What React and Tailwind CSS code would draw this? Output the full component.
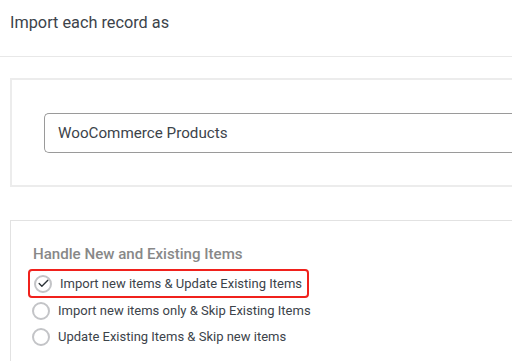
import { Check } from "lucide-react";

const options = [
  { label: "Import new items & Update Existing Items", checked: true },
  { label: "Import new items only & Skip Existing Items", checked: false },
  { label: "Update Existing Items & Skip new items", checked: false },
];

function Radio({ checked }) {
  return (
    <span className="w-[18px] h-[18px] rounded-full border-2 border-[#c3c4c7] flex items-center justify-center shrink-0">
      {checked && <Check className="w-[13px] h-[13px] text-[#2c3338]" strokeWidth={2.5} />}
    </span>
  );
}

export default function App() {
  return (
    <div className="w-[512px] h-[361px] overflow-hidden bg-white font-['Roboto',sans-serif] text-[#3c434a]">
      {/* Header */}
      <div className="h-[57px] border-b border-[#e8e8e8] pl-[10px] pt-[13px]">
        <h2 className="text-[16.3px] leading-[20px]">Import each record as</h2>
      </div>

      {/* Post type box */}
      <div className="ml-[10px] mt-[21px] h-[109px] border-2 border-r-0 border-[#ececec] pl-[32px] pt-[33px]">
        <div className="h-[40px] border border-[#9a9a9a] border-r-0 rounded-l-[5px] flex items-center pl-[13px] text-[15.2px]">
          WooCommerce Products
        </div>
      </div>

      {/* Handle items box */}
      <div className="ml-[10px] mt-[33px] h-[200px] border border-r-0 border-b-0 border-[#e2e2e2] pl-[22px] pt-[22px]">
        <h3 className="text-[15.1px] font-medium text-[#888888] leading-[22px]">Handle New and Existing Items</h3>
        <div className="mt-[4px] flex flex-col">
          {options.map((opt) => (
            <div
              key={opt.label}
              className={
                opt.checked
                  ? "-ml-[5px] w-[281px] h-[29px] flex items-center gap-[8px] pl-[4px] border-2 border-[#f0211c] rounded-[4px]"
                  : "h-[26px] flex items-center gap-[8px] -ml-[1px]"
              }
            >
              <Radio checked={opt.checked} />
              <span className="text-[13px] whitespace-nowrap">{opt.label}</span>
            </div>
          ))}
        </div>
      </div>
    </div>
  );
}
